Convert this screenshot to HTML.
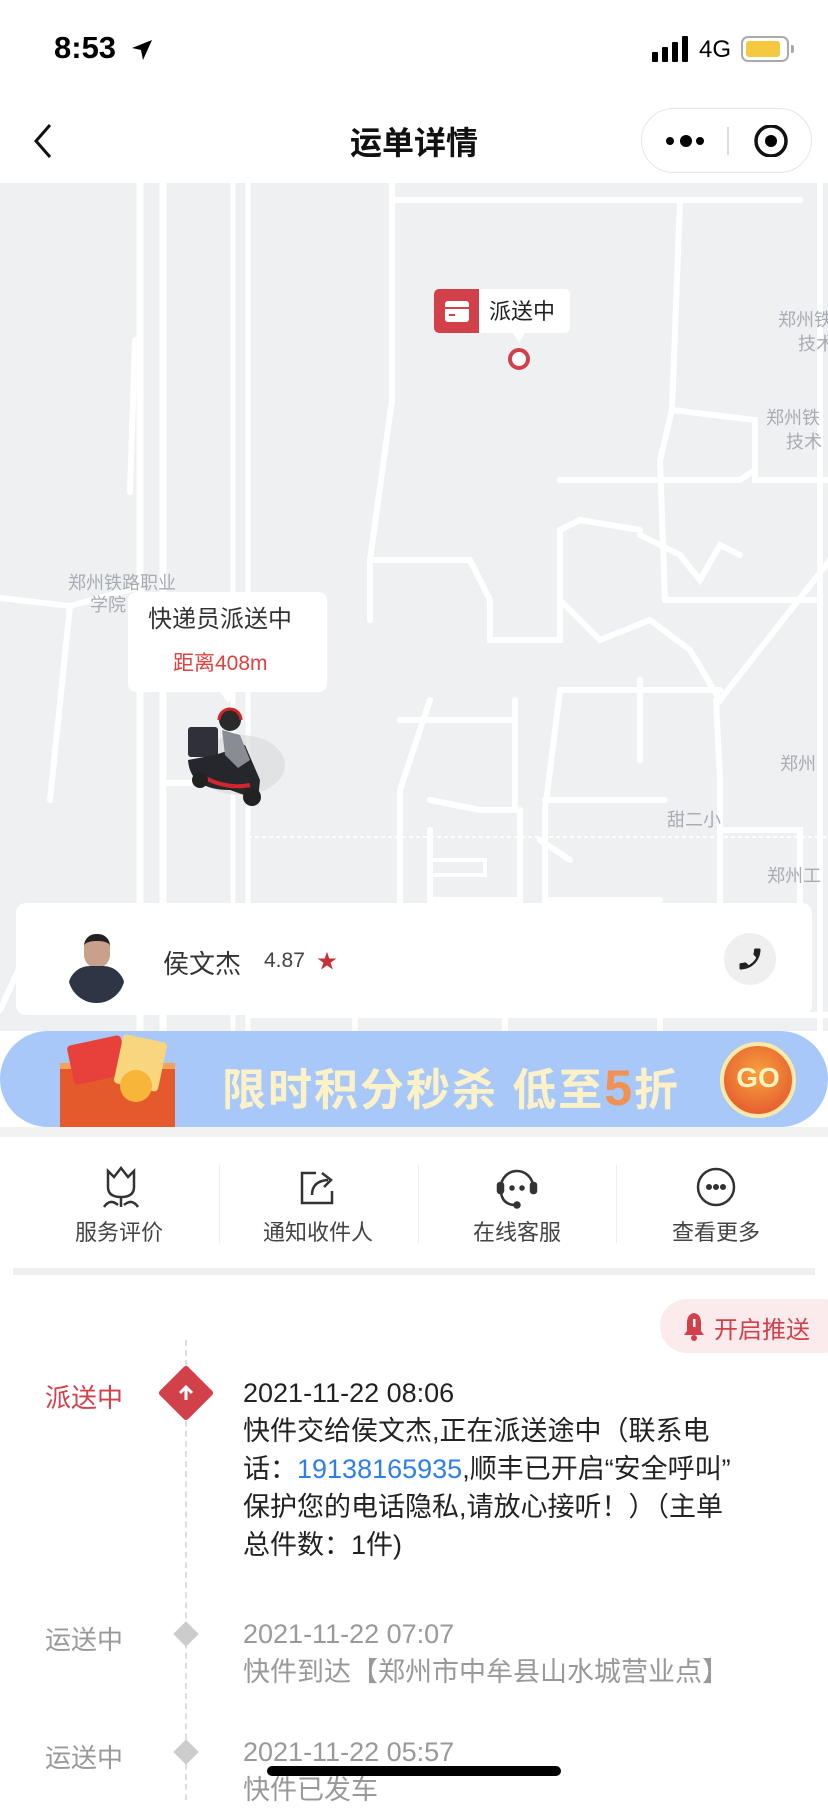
<!DOCTYPE html>
<html><head><meta charset="utf-8">
<style>
*{margin:0;padding:0;box-sizing:border-box}
body{width:828px;height:1792px;overflow:hidden;background:#fff;font-family:"Liberation Sans","Noto Sans CJK SC",sans-serif;position:relative;color:#222}
.abs{position:absolute}
</style></head><body>
<div class="abs" style="left:54px;top:30px;font-size:31px;font-weight:bold;color:#000">8:53</div>
<svg class="abs" style="left:130px;top:38px" width="24" height="24" viewBox="0 0 24 24"><path d="M22 2 L2 10 L11 12 L13 22 Z" fill="#000"/></svg>
<svg class="abs" style="left:652px;top:36px" width="40" height="26"><rect x="0" y="16" width="6" height="10" rx="1"/><rect x="10" y="11" width="6" height="15" rx="1"/><rect x="20" y="6" width="6" height="20" rx="1"/><rect x="30" y="0" width="6" height="26" rx="1"/></svg>
<div class="abs" style="left:699px;top:36px;font-size:24px;color:#000">4G</div>
<div class="abs" style="left:741px;top:36px;width:48px;height:26px;border:2px solid #aaa;border-radius:7px;padding:3px"><div style="width:34px;height:16px;background:#f5c842;border-radius:3px"></div></div>
<div class="abs" style="left:791px;top:45px;width:3px;height:8px;background:#aaa;border-radius:0 2px 2px 0"></div>
<svg class="abs" style="left:28px;top:122px" width="28" height="38"><path d="M22 3 L8 19 L22 35" stroke="#111" stroke-width="3" fill="none"/></svg>
<div class="abs" style="left:0;width:828px;top:118px;text-align:center;font-size:32px;font-weight:bold;color:#111">运单详情</div>
<div class="abs" style="left:641px;top:108px;width:171px;height:65px;border:1px solid #e6e6e6;border-radius:33px;background:#fff"></div>
<svg class="abs" style="left:660px;top:125px" width="150" height="32"><circle cx="10" cy="16" r="4"/><circle cx="26" cy="16" r="6"/><circle cx="40" cy="16" r="4"/><line x1="68" y1="2" x2="68" y2="30" stroke="#ddd" stroke-width="2"/><circle cx="111" cy="16" r="15" fill="none" stroke="#111" stroke-width="3.5"/><circle cx="111" cy="16" r="6"/></svg>
<svg class="abs" style="left:0;top:183px" width="828" height="848" viewBox="0 183 828 848">
<rect x="0" y="183" width="828" height="848" fill="#eef0f2"/>
<g stroke="#fff" fill="none" stroke-width="6" stroke-linecap="round">
<path d="M140 183 V1031 M163 183 V1031" stroke-width="7"/>
<path d="M233 183 V1031 M248 183 V1031" stroke-width="5"/>
<path d="M0 598 L70 606 L135 588"/>
<path d="M70 606 L50 800 M130 492 L135 340"/>
<path d="M0 1010 L30 945 L130 980"/>
<path d="M165 783 H233 M165 620 H233"/>
<path d="M392 183 V200 L392 400 L370 560 L370 620"/>
<path d="M392 200 H800 M392 195 V183"/>
<path d="M370 560 H470 L490 600 L490 640 H560 V530 L580 520 L640 530"/>
<path d="M680 200 L672 410 L660 460 L665 600 H815"/>
<path d="M672 410 L755 420 V480 H828"/>
<path d="M560 480 H740 L755 470"/>
<path d="M640 535 L680 555 L700 580 L720 545 L740 555"/>
<path d="M560 600 L600 640 L650 620 L690 650 L720 700 L830 560"/>
<path d="M640 680 L640 760 M560 690 L720 690"/>
<path d="M430 700 L400 790 V960 Q400 990 440 995 H720 V780 L716 700"/>
<path d="M400 720 H510 M430 800 L480 810 L515 810 V700"/>
<path d="M560 690 L545 810 V995"/>
<path d="M520 810 V995"/>
<path d="M545 800 H665"/>
<path d="M720 780 V1000 M720 830 H800 V1000"/>
<path d="M430 830 V900 L515 900"/>
<path d="M430 860 H485 V875 H430 Z" stroke-width="4"/>
<path d="M430 935 H485 V950 H430 Z" stroke-width="4"/>
<path d="M540 840 L570 860 M545 900 H660 M545 975 H665"/>
<path d="M248 1015 H828 M248 1050 H828"/>
<path d="M355 1015 V1031 M505 1015 V1031 M660 1015 V1031"/>
<path d="M820 183 V1031"/>
</g>
<path d="M248 837 H828" stroke="#fff" stroke-width="2" stroke-dasharray="4 3"/>
<g fill="#a8acb3" font-size="18" font-family="Liberation Sans,Noto Sans CJK SC,sans-serif">
<text x="68" y="589">郑州铁路职业</text><text x="90" y="611">学院</text>
<text x="667" y="826">甜二小</text>
<text x="778" y="326">郑州铁</text><text x="798" y="350">技术</text>
<text x="766" y="424">郑州铁</text><text x="786" y="448">技术</text>
<text x="780" y="770">郑州</text><text x="767" y="882">郑州工</text>
</g>
<rect x="434" y="289" width="136" height="44" rx="5" fill="#fff"/>
<path d="M434 294 a5 5 0 0 1 5 -5 H479 V333 H439 a5 5 0 0 1 -5 -5Z" fill="#d2404a"/>
<rect x="445" y="301" width="24" height="21" rx="3" fill="#fff"/><rect x="445" y="307" width="24" height="2" fill="#d2404a"/><rect x="449" y="314" width="6" height="2" fill="#d2404a"/>
<text x="489" y="319" font-size="22" fill="#222" font-family="Liberation Sans,Noto Sans CJK SC,sans-serif">派送中</text>
<path d="M513 333 L519 343 L525 333Z" fill="#fff"/>
<circle cx="519" cy="359" r="9" fill="#fff" stroke="#d2404a" stroke-width="4"/>
<rect x="128" y="592" width="199" height="100" rx="8" fill="#fff"/>
<path d="M220 692 L228 703 L236 692Z" fill="#fff"/>
<text x="148" y="627" font-size="24" fill="#333" font-family="Liberation Sans,Noto Sans CJK SC,sans-serif">快递员派送中</text>
<text x="173" y="670" font-size="21" fill="#e0413f" font-family="Liberation Sans,Noto Sans CJK SC,sans-serif">距离408m</text>
<ellipse cx="240" cy="765" rx="45" ry="30" fill="#d8d9db" opacity=".6"/>
<rect x="188" y="727" width="30" height="30" rx="3" fill="#2f3038"/>
<path d="M188 760 Q190 790 230 790 L258 800 L260 780 L245 745 L215 755Z" fill="#26272d"/>
<path d="M200 775 Q225 790 250 785" stroke="#d2262c" stroke-width="4" fill="none"/>
<circle cx="200" cy="780" r="8" fill="#222"/><circle cx="252" cy="797" r="9" fill="#222"/>
<path d="M222 730 L240 735 L250 760 L238 768 L225 755Z" fill="#8a8c93"/>
<circle cx="230" cy="720" r="11" fill="#2a2a2a"/><path d="M219 720 A11 11 0 0 1 241 720" stroke="#d2262c" stroke-width="3" fill="none"/>
</svg>
<div class="abs" style="left:16px;top:903px;width:796px;height:112px;background:#fff;border-radius:10px"></div>
<div class="abs" style="left:68px;top:930px;width:57px;height:73px;border-radius:0 0 30px 30px;overflow:hidden;background:#fff">
<div style="position:absolute;left:16px;top:4px;width:26px;height:34px;background:#c9a08a;border-radius:12px 12px 13px 13px;border-top:7px solid #222"></div>
<div style="position:absolute;left:0;top:36px;width:57px;height:40px;background:#2e3646;border-radius:22px 22px 0 0"></div>
</div>
<div class="abs" style="left:163px;top:944px;font-size:26px;color:#333">侯文杰</div>
<div class="abs" style="left:264px;top:949px;font-size:21px;color:#444">4.87</div>
<div class="abs" style="left:317px;top:945px;font-size:20px;color:#c8303a">★</div>
<div class="abs" style="left:724px;top:933px;width:52px;height:52px;border-radius:50%;background:#efefef"></div>
<svg class="abs" style="left:736px;top:945px" width="28" height="28" viewBox="0 0 24 24"><path d="M20 15.5c-1.2 0-2.4-.2-3.6-.6-.3-.1-.7 0-1 .2l-2.2 2.2c-2.8-1.4-5.1-3.8-6.6-6.6l2.2-2.2c.3-.3.4-.7.2-1C8.700 6.400 8.500 5.200 8.500 4c0-.6-.4-1-1-1H4c-.6 0-1 .4-1 1 0 9.400 7.600 17 17 17 .6 0 1-.4 1-1v-3.500c0-.6-.4-1-1-1z" fill="#222" transform="scale(-1,1) translate(-24,0)"/></svg>
<div class="abs" style="left:0;top:1127px;width:828px;height:10px;background:#f2f2f2"></div>
<div class="abs" style="left:0;top:1031px;width:828px;height:96px;background:#a9c8fa;border-radius:48px"></div>
<div class="abs" style="left:60px;top:1063px;width:115px;height:64px;background:#e45a2c;border-top:6px solid #f3a25a"></div>
<div class="abs" style="left:70px;top:1040px;width:55px;height:40px;background:#e8403a;transform:rotate(-12deg);border-radius:4px"></div>
<div class="abs" style="left:118px;top:1038px;width:45px;height:50px;background:#f7d67e;transform:rotate(12deg);border-radius:4px"></div>
<div class="abs" style="left:120px;top:1070px;width:32px;height:32px;background:#f7b53a;border-radius:50%"></div>
<div class="abs" style="left:222px;top:1054px;font-size:44px;font-weight:bold;color:#fdf2c7;letter-spacing:2px;white-space:nowrap">限时积分秒杀 低至<span style="color:#f29150;font-size:50px">5</span>折</div>
<div class="abs" style="left:720px;top:1042px;width:76px;height:76px;border-radius:50%;background:radial-gradient(circle at 50% 40%,#f7a23c,#e14b2d);border:4px solid #fde9a8"></div>
<div class="abs" style="left:720px;top:1062px;width:76px;text-align:center;font-size:28px;font-weight:bold;color:#fff3c0">GO</div>
<div class="abs" style="left:219px;top:1165px;width:1px;height:78px;background:#eee"></div>
<div class="abs" style="left:418px;top:1165px;width:1px;height:78px;background:#eee"></div>
<div class="abs" style="left:616px;top:1165px;width:1px;height:78px;background:#eee"></div>
<svg class="abs" style="left:100px;top:1165px" width="42" height="44" viewBox="0 0 42 44" fill="none" stroke="#333" stroke-width="2.5"><path d="M8 6 L14 12 L21 3 L28 12 L34 6 V22 Q34 32 21 32 Q8 32 8 22Z"/><path d="M21 32 V42 M4 42 Q10 33 18 40 M38 42 Q32 33 24 40"/></svg>
<svg class="abs" style="left:298px;top:1167px" width="40" height="40" viewBox="0 0 40 40" fill="none" stroke="#333" stroke-width="2.5"><path d="M18 6 H4 V36 H34 V24"/><path d="M14 28 Q14 14 30 13 M24 6 L33 13 L26 20"/></svg>
<svg class="abs" style="left:495px;top:1165px" width="44" height="44" viewBox="0 0 44 44" fill="none" stroke="#333" stroke-width="2.5"><path d="M6 22 A16 16 0 0 1 38 22"/><rect x="3" y="18" width="5" height="10" rx="2" fill="#333"/><rect x="36" y="18" width="5" height="10" rx="2" fill="#333"/><path d="M6 28 Q8 40 21 40"/><circle cx="22" cy="40" r="2.5" fill="#333"/><circle cx="17" cy="23" r="1.5" fill="#333"/><circle cx="27" cy="23" r="1.5" fill="#333"/></svg>
<svg class="abs" style="left:695px;top:1166px" width="42" height="42" fill="none" stroke="#333" stroke-width="2.5"><circle cx="21" cy="21" r="18"/><circle cx="14" cy="21" r="1.8" fill="#333"/><circle cx="21" cy="21" r="1.8" fill="#333"/><circle cx="28" cy="21" r="1.8" fill="#333"/></svg>
<div class="abs" style="left:20px;width:198px;top:1215px;text-align:center;font-size:22px;color:#444">服务评价</div>
<div class="abs" style="left:219px;width:198px;top:1215px;text-align:center;font-size:22px;color:#444">通知收件人</div>
<div class="abs" style="left:418px;width:198px;top:1215px;text-align:center;font-size:22px;color:#444">在线客服</div>
<div class="abs" style="left:617px;width:198px;top:1215px;text-align:center;font-size:22px;color:#444">查看更多</div>
<div class="abs" style="left:13px;top:1268px;width:802px;height:7px;background:#efefef"></div>
<div class="abs" style="left:660px;top:1299px;width:190px;height:54px;border-radius:27px;background:#fbebed"></div>
<svg class="abs" style="left:682px;top:1311px" width="24" height="30" viewBox="0 0 24 30"><path d="M12 2 Q5 3 5 12 V20 L2 24 H22 L19 20 V12 Q19 3 12 2Z" fill="#d2404a"/><circle cx="12" cy="27" r="3" fill="#d2404a"/><rect x="11" y="8" width="2.5" height="8" fill="#fff"/></svg>
<div class="abs" style="left:714px;top:1310px;font-size:24px;color:#d2404a">开启推送</div>
<div class="abs" style="left:185px;top:1340px;height:460px;border-left:2px dashed #ddd"></div>
<div class="abs" style="left:45px;top:1378px;font-size:26px;color:#d2404a">派送中</div>
<div class="abs" style="left:166px;top:1373px;width:40px;height:40px;background:#d2404a;transform:rotate(45deg);border-radius:3px"></div>
<svg class="abs" style="left:176px;top:1383px" width="20" height="20"><path d="M10 17 V4 M4 10 L10 4 L16 10" stroke="#fff" stroke-width="3" fill="none"/></svg>
<div class="abs" style="left:243px;top:1374px;white-space:nowrap;font-size:27px;line-height:38px;color:#222">2021-11-22 08:06<br>快件交给侯文杰,正在派送途中（联系电<br>话：<span style="color:#2f7fe8">19138165935</span>,顺丰已开启“安全呼叫”<br>保护您的电话隐私,请放心接听！）（主单<br>总件数：1件)</div>
<div class="abs" style="left:45px;top:1620px;font-size:26px;color:#999">运送中</div>
<div class="abs" style="left:177px;top:1625px;width:18px;height:18px;background:#ccc;transform:rotate(45deg)"></div>
<div class="abs" style="left:243px;top:1615px;white-space:nowrap;font-size:27px;line-height:38px;color:#999">2021-11-22 07:07<br>快件到达【郑州市中牟县山水城营业点】</div>
<div class="abs" style="left:45px;top:1738px;font-size:26px;color:#999">运送中</div>
<div class="abs" style="left:177px;top:1743px;width:18px;height:18px;background:#ccc;transform:rotate(45deg)"></div>
<div class="abs" style="left:243px;top:1733px;white-space:nowrap;font-size:27px;line-height:38px;color:#999">2021-11-22 05:57<br>快件已发车</div>
<div class="abs" style="left:267px;top:1766px;width:294px;height:10px;border-radius:5px;background:#000"></div>
</body></html>
